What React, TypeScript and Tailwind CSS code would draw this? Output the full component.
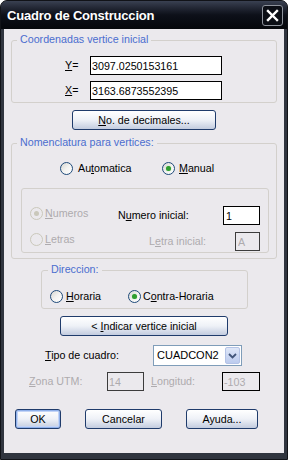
import React from "react";

const Radio = ({ checked = false, disabled = false }: { checked?: boolean; disabled?: boolean }) => (
  <span
    className={`relative inline-block w-[13px] h-[13px] shrink-0 rounded-full border ${
      disabled
        ? "border-[#cac8bb] bg-[#ebe9ed]"
        : "border-[#1e4a7a] bg-linear-to-br from-[#d6d6d0] via-[#f3f3f1] to-white"
    }`}
  >
    {checked && (
      <span
        className={`absolute left-[3px] top-[3px] w-[5px] h-[5px] rounded-full ${
          disabled ? "bg-[#cac8bb]" : "bg-[#2f9e2f] shadow-[0_0_1px_#7fd27f]"
        }`}
      />
    )}
  </span>
);

const Btn = ({
  children,
  className = "",
  def = false,
}: {
  children: React.ReactNode;
  className?: string;
  def?: boolean;
}) => (
  <button
    type="button"
    className={`h-[20px] shrink-0 rounded-[3px] border border-[#1f3b6b] bg-linear-to-b from-white via-[#eef1f7] to-[#c3ccdf] text-[10.7px] leading-none text-black ${
      def ? "shadow-[inset_0_0_0_1px_#8fb0ea,inset_0_0_0_2px_#c3d4f6]" : ""
    } ${className}`}
  >
    {children}
  </button>
);

const Group = ({
  label,
  labelLeft,
  className = "",
  children,
}: {
  label?: string;
  labelLeft?: string;
  className?: string;
  children: React.ReactNode;
}) => (
  <div className={`relative shrink-0 rounded-[3px] border border-[#d3d0cc] ${className}`}>
    {label && (
      <span
        className={`absolute -top-[8px] ${labelLeft} bg-[#ebe9ed] px-[3px] text-[10.7px] leading-[13px] text-[#4a6dcf]`}
      >
        {label}
      </span>
    )}
    {children}
  </div>
);

const App = () => {
  return (
    <div className="w-[288px] h-[460px] bg-white font-['Liberation_Sans',Arial,sans-serif]">
      <div className="flex flex-col w-[288px] h-[460px] rounded-t-[7px] border border-[#111318] bg-[#30353f]">
        {/* barra de titulo */}
        <div className="flex items-center justify-between h-[28px] shrink-0 rounded-t-[6px] bg-linear-to-b from-[#3a4152] via-[#0d1019] to-[#05070b] pl-[6px] pr-[4px] pt-[1px]">
          <span className="text-[13px] font-bold text-white tracking-[-0.2px]">
            Cuadro de Construccion
          </span>
          <span className="flex items-center justify-center w-[21px] h-[21px] rounded-[3px] border border-[#8e939c] bg-[#0b0e15]">
            <svg width="13" height="13" viewBox="0 0 13 13">
              <path d="M2 2 L11 11 M11 2 L2 11" stroke="white" strokeWidth="2.4" strokeLinecap="square" />
            </svg>
          </span>
        </div>

        {/* area cliente */}
        <div className="flex flex-col mx-[3px] w-[280px] h-[424px] bg-[#ebe9ed] text-[10.7px] text-black">
          <Group label="Coordenadas vertice inicial" labelLeft="left-[5px]" className="mt-[11px] ml-[7px] w-[266px] h-[63px] pt-[15px]">
            <div className="flex items-center h-[19px]">
              <span className="ml-[53px] w-[25px]">
                <u>Y</u>=
              </span>
              <input
                readOnly
                value="3097.0250153161"
                className="w-[132px] h-[19px] border border-black bg-white px-[1px] text-[10.7px] outline-none"
              />
            </div>
            <div className="flex items-center h-[19px] mt-[6px]">
              <span className="ml-[53px] w-[25px]">
                <u>X</u>=
              </span>
              <input
                readOnly
                value="3163.6873552395"
                className="w-[132px] h-[19px] border border-black bg-white px-[1px] text-[10.7px] outline-none"
              />
            </div>
          </Group>

          <Btn className="mt-[7px] ml-[68px] w-[144px]">
            <u>N</u>o. de decimales...
          </Btn>

          <Group label="Nomenclatura para vertices:" labelLeft="left-[5px]" className="mt-[13px] ml-[7px] w-[266px] h-[116px] pt-[18px]">
            <div className="flex items-center h-[13px]">
              <span className="flex items-center ml-[48px] w-[102px] gap-[5px]">
                <Radio />
                <span>
                  Au<u>t</u>omatica
                </span>
              </span>
              <span className="flex items-center gap-[4px]">
                <Radio checked />
                <span>
                  <u>M</u>anual
                </span>
              </span>
            </div>

            <div className="mt-[13px] ml-[9px] w-[248px] h-[65px] rounded-[3px] border border-[#d3d0cc] pt-[17px]">
              <div className="flex items-center h-[19px]">
                <span className="flex items-center ml-[8px] w-[88px] gap-[2px] mb-[4px] text-[#aeabae]">
                  <Radio checked disabled />
                  <span>
                    <u>N</u>umeros
                  </span>
                </span>
                <span className="w-[105px]">
                  N<u>u</u>mero inicial:
                </span>
                <input
                  readOnly
                  value="1"
                  className="w-[37px] h-[19px] border border-black bg-white px-[2px] text-[10.7px] outline-none"
                />
              </div>
              <div className="flex items-center h-[19px] mt-[7px]">
                <span className="flex items-center ml-[8px] w-[119px] gap-[2px] mb-[4px] text-[#aeabae]">
                  <Radio disabled />
                  <span>
                    <u>L</u>etras
                  </span>
                </span>
                <span className="w-[86px] text-[#aeabae]">
                  L<u>e</u>tra inicial:
                </span>
                <input
                  readOnly
                  value="A"
                  className="w-[25px] h-[19px] border border-[#3c3c3c] bg-[#ebe9ed] px-[2px] text-[10.7px] text-[#aeabae] outline-none"
                />
              </div>
            </div>
          </Group>

          <Group label="Direccion:" labelLeft="left-[6px]" className="mt-[11px] ml-[37px] w-[207px] h-[39px] pt-[19px]">
            <div className="flex items-center h-[13px]">
              <span className="flex items-center ml-[8px] w-[78px] gap-[3px]">
                <Radio />
                <span>
                  <u>H</u>oraria
                </span>
              </span>
              <span className="flex items-center gap-[2px]">
                <Radio checked />
                <span>
                  C<u>o</u>ntra-Horaria
                </span>
              </span>
            </div>
          </Group>

          <Btn className="mt-[7px] ml-[56px] w-[168px]">
            &lt; <u>I</u>ndicar vertice inicial
          </Btn>

          <div className="flex items-center h-[21px] mt-[9px]">
            <span className="ml-[41px] w-[108px]">
              <u>T</u>ipo de cuadro:
            </span>
            <div className="flex items-center justify-between w-[89px] h-[21px] border border-[#7f9db9] bg-white pl-[3px] pr-[1px]">
              <span className="text-[11px]">CUADCON2</span>
              <span className="flex items-center justify-center w-[15px] h-[17px] rounded-[2px] border border-[#b4c3e6] bg-linear-to-b from-[#dfe7f8] to-[#bccbee]">
                <svg width="9" height="6" viewBox="0 0 9 6">
                  <path d="M1 1 L4.5 4.5 L8 1" stroke="#42557a" strokeWidth="1.8" fill="none" />
                </svg>
              </span>
            </div>
          </div>

          <div className="flex items-center h-[19px] mt-[6px] text-[#aeabae]">
            <span className="ml-[25px] w-[78px]">
              <u>Z</u>ona UTM:
            </span>
            <input
              readOnly
              value="14"
              className="w-[37px] h-[19px] border border-[#3c3c3c] bg-[#ebe9ed] px-[1px] text-[10.7px] text-[#aeabae] outline-none"
            />
            <span className="ml-[7px] w-[71px]">
              <u>L</u>ongitud:
            </span>
            <input
              readOnly
              value="-103"
              className="w-[38px] h-[19px] border border-black bg-[#ebe9ed] px-[1px] text-[10.7px] text-[#aeabae] outline-none"
            />
          </div>

          <div className="flex items-center h-[20px] mt-[18px]">
            <Btn def className="ml-[11px] w-[46px]">
              OK
            </Btn>
            <Btn className="ml-[24px] w-[77px]">Cancelar</Btn>
            <Btn className="ml-[24px] w-[72px]">Ayuda...</Btn>
          </div>
        </div>
      </div>
    </div>
  );
};

export default App;
